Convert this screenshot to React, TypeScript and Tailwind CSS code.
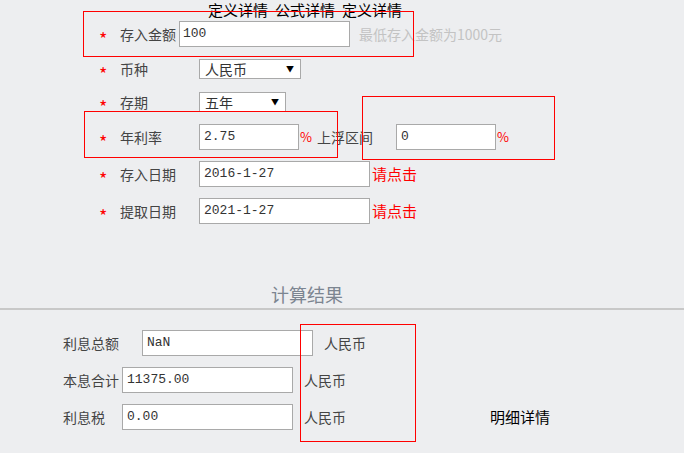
import React from 'react';

const cjk = "font-['Noto_Sans_CJK_SC',sans-serif]";
const mono = "font-['Liberation_Mono','Noto_Sans_CJK_SC',monospace]";

function Star() {
  return <span className="w-[36px] pl-[15px] text-[18px] leading-none text-[#ff0000] translate-y-[4px] select-none">*</span>;
}

function Field({ value, width, pad = 'pl-1' }: { value: string; width: string; pad?: string }) {
  return (
    <div className={`${width} h-[26px] bg-white border border-[#a9a9a9] flex items-center ${pad} ${mono} text-[13px] text-[#333]`}>
      {value}
    </div>
  );
}

function Select({ value, width }: { value: string; width: string }) {
  return (
    <div className={`${width} h-[20px] bg-white border border-[#a9a9a9] flex items-center justify-between pl-[5px] pr-[6px] text-[14px] text-[#333]`}>
      <span>{value}</span>
      <span className="text-[8px] text-black">▼</span>
    </div>
  );
}

export default function App() {
  return (
    <div className={`relative w-full min-h-[453px] bg-[#edeef0] overflow-hidden ${cjk} text-[14px] text-[#444]`}>
      {/* 顶部链接 */}
      <div className="h-[21px] pl-[208px] flex gap-[7px] text-black text-[15px] leading-[20px]">
        <span>定义详情</span>
        <span>公式详情</span>
        <span>定义详情</span>
      </div>

      {/* 表单 */}
      <div className="pl-[84px] flex flex-col">
        <div className="h-[26px] flex items-center">
          <Star />
          <span className="w-[59px]">存入金额</span>
          <Field value="100" width="w-[171px]" pad="pl-[3px]" />
          <span className="ml-[9px] text-[#c3c3c3]">最低存入金额为1000元</span>
        </div>

        <div className="h-[20px] mt-[12px] flex items-center">
          <Star />
          <span className="w-[79px]">币种</span>
          <Select value="人民币" width="w-[102px]" />
        </div>

        <div className="h-[20px] mt-[13px] flex items-center">
          <Star />
          <span className="w-[79px]">存期</span>
          <Select value="五年" width="w-[87px]" />
        </div>

        <div className="h-[26px] mt-[12px] flex items-center">
          <Star />
          <span className="w-[79px]">年利率</span>
          <Field value="2.75" width="w-[100px]" />
          <span className="text-[#ff0000] text-[13px] ml-[1px]">%</span>
          <span className="ml-[5px] w-[79px]">上浮区间</span>
          <Field value="0" width="w-[100px]" />
          <span className="text-[#ff0000] text-[13px] ml-[1px]">%</span>
        </div>

        <div className="h-[26px] mt-[11px] flex items-center">
          <Star />
          <span className="w-[79px]">存入日期</span>
          <Field value="2016-1-27" width="w-[171px]" />
          <span className="ml-[2px] text-[#ff0000] text-[15px]">请点击</span>
        </div>

        <div className="h-[26px] mt-[11px] flex items-center">
          <Star />
          <span className="w-[79px]">提取日期</span>
          <Field value="2021-1-27" width="w-[171px]" />
          <span className="ml-[2px] text-[#ff0000] text-[15px]">请点击</span>
        </div>
      </div>

      {/* 计算结果 */}
      <div className="mt-[59px] pl-[271px] h-[24px] text-[18px] text-[#7c8591] leading-[22px]">计算结果</div>
      <div className="mt-[1px] h-[2px] bg-[#c8c8c8]" />

      <div className="pl-[63px] pt-[20px] flex flex-col gap-[11px]">
        <div className="h-[26px] flex items-center">
          <span className="w-[79px]">利息总额</span>
          <Field value="NaN" width="w-[171px]" />
          <span className="ml-[11px]">人民币</span>
        </div>
        <div className="h-[26px] flex items-center">
          <span className="w-[59px]">本息合计</span>
          <Field value="11375.00" width="w-[171px]" />
          <span className="ml-[11px]">人民币</span>
        </div>
        <div className="h-[26px] flex items-center">
          <span className="w-[59px]">利息税</span>
          <Field value="0.00" width="w-[171px]" />
          <span className="ml-[11px]">人民币</span>
          <span className="ml-[144px] text-black text-[15px]">明细详情</span>
        </div>
      </div>

      {/* 红色标注框 */}
      <div className="absolute left-[83px] top-[11px] w-[331px] h-[46px] border border-[#ff0000]" />
      <div className="absolute left-[84px] top-[111px] w-[254px] h-[47px] border border-[#ff0000]" />
      <div className="absolute left-[362px] top-[96px] w-[193px] h-[64px] border border-[#ff0000]" />
      <div className="absolute left-[300px] top-[324px] w-[116px] h-[118px] border border-[#ff0000]" />
    </div>
  );
}
